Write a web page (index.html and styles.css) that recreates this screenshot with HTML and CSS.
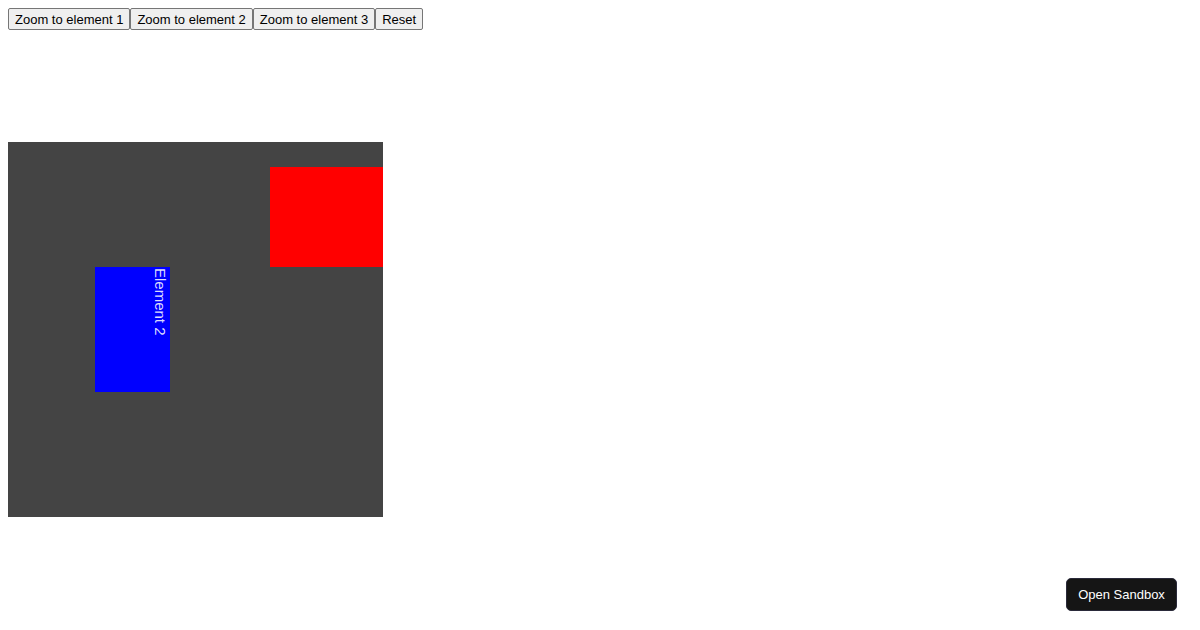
FILE: index.html
```html
<!DOCTYPE html>
<html>
<head>
<meta charset="utf-8">
<link rel="stylesheet" href="styles.css">
</head>
<body>
<div class="controls">
  <button class="btn">Zoom to element 1</button><button class="btn">Zoom to element 2</button><button class="btn">Zoom to element 3</button><button class="btn">Reset</button>
</div>
<div class="canvas">
  <div class="node red"></div>
  <div class="node blue"><span class="label">Element 2</span></div>
</div>
<button class="sandbox">Open Sandbox</button>
</body>
</html>
```
FILE: styles.css
```css
html, body { margin: 0; padding: 0; }
body {
  margin: 8px;
  background: #fff;
  font-family: "Liberation Sans", Arial, sans-serif;
}
.controls { display: flex; height: 22px; }
.btn {
  font-family: "Liberation Sans", Arial, sans-serif;
  font-size: 13px;
  color: #000;
  background: #efefef;
  border: 1px solid #767676;
  border-radius: 2px;
  padding: 1px 6px;
  height: 22px;
  margin: 0;
}
.canvas {
  position: relative;
  margin-top: 112px;
  width: 375px;
  height: 375px;
  background: #444444;
  overflow: hidden;
}
.node { position: absolute; }
.red {
  left: 262px;
  top: 25px;
  width: 125px;
  height: 100px;
  background: #ff0000;
}
.blue {
  left: 87px;
  top: 125px;
  width: 75px;
  height: 125px;
  background: #0000ff;
}
.label {
  position: absolute;
  right: 1px;
  top: 1px;
  writing-mode: vertical-rl;
  color: #dcdcff;
  font-size: 15px;
  font-family: "Liberation Sans", Arial, sans-serif;
  line-height: 17px;
}
.sandbox {
  position: fixed;
  right: 23px;
  bottom: 19px;
  width: 111px;
  height: 33px;
  background: #151515;
  color: #fff;
  border: 1px solid #2a2a3a;
  border-radius: 5px;
  font-family: "Liberation Sans", Arial, sans-serif;
  font-size: 13px;
  padding: 0;
}
```
